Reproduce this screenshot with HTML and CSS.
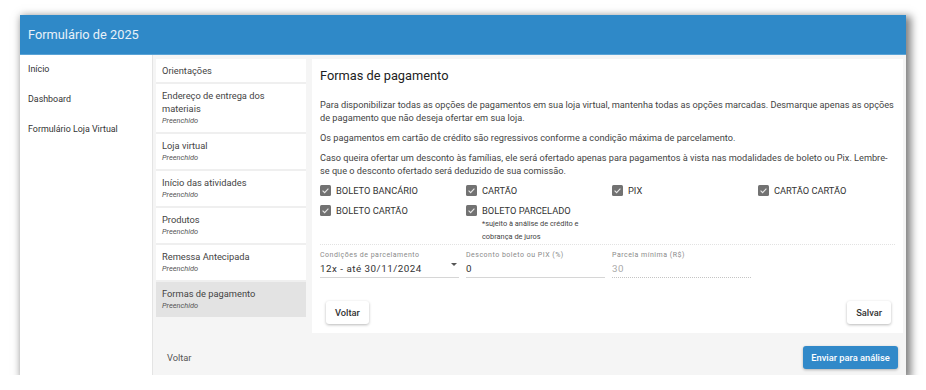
FILE: index.html
```html
<!DOCTYPE html>
<html lang="pt-BR">

<head>
    <meta charset="UTF-8">
    <title>Formulário de 2025</title>
    <link rel="stylesheet" href="styles.css">
</head>

<body>
    <div class="window">
        <!-- topo -->
        <header class="topbar">Formulário de 2025</header>

        <div class="layout">
            <!-- menu lateral -->
            <nav class="sidebar">
                <a class="nav-link">Início</a>
                <a class="nav-link">Dashboard</a>
                <a class="nav-link">Formulário Loja Virtual</a>
            </nav>

            <main class="main">
                <div class="workspace">
                    <!-- etapas -->
                    <ul class="steps">
                        <li class="step"><span class="step-title">Orientações</span></li>
                        <li class="step">
                            <span class="step-title">Endereço de entrega dos materiais</span>
                            <span class="step-status">Preenchido</span>
                        </li>
                        <li class="step">
                            <span class="step-title">Loja virtual</span>
                            <span class="step-status">Preenchido</span>
                        </li>
                        <li class="step">
                            <span class="step-title">Início das atividades</span>
                            <span class="step-status">Preenchido</span>
                        </li>
                        <li class="step">
                            <span class="step-title">Produtos</span>
                            <span class="step-status">Preenchido</span>
                        </li>
                        <li class="step">
                            <span class="step-title">Remessa Antecipada</span>
                            <span class="step-status">Preenchido</span>
                        </li>
                        <li class="step active">
                            <span class="step-title">Formas de pagamento</span>
                            <span class="step-status">Preenchido</span>
                        </li>
                    </ul>

                    <!-- formulário -->
                    <section class="card">
                        <h2 class="card-title">Formas de pagamento</h2>
                        <p class="text">Para disponibilizar todas as opções de pagamentos em sua loja virtual, mantenha todas as opções marcadas. Desmarque apenas as opções de pagamento que não deseja ofertar em sua loja.</p>
                        <p class="text">Os pagamentos em cartão de crédito são regressivos conforme a condição máxima de parcelamento.</p>
                        <p class="text">Caso queira ofertar um desconto às famílias, ele será ofertado apenas para pagamentos à vista nas modalidades de boleto ou Pix. Lembre-se que o desconto ofertado será deduzido de sua comissão.</p>

                        <div class="options">
                            <label class="option">
                                <svg class="check" viewBox="0 0 11 11"><rect width="11" height="11" rx="1.5" /><path d="M2.6 5.6l2 2 3.8-4" /></svg>
                                <span>BOLETO BANCÁRIO</span>
                            </label>
                            <label class="option">
                                <svg class="check" viewBox="0 0 11 11"><rect width="11" height="11" rx="1.5" /><path d="M2.6 5.6l2 2 3.8-4" /></svg>
                                <span>CARTÃO</span>
                            </label>
                            <label class="option">
                                <svg class="check" viewBox="0 0 11 11"><rect width="11" height="11" rx="1.5" /><path d="M2.6 5.6l2 2 3.8-4" /></svg>
                                <span>PIX</span>
                            </label>
                            <label class="option">
                                <svg class="check" viewBox="0 0 11 11"><rect width="11" height="11" rx="1.5" /><path d="M2.6 5.6l2 2 3.8-4" /></svg>
                                <span>CARTÃO CARTÃO</span>
                            </label>
                            <label class="option">
                                <svg class="check" viewBox="0 0 11 11"><rect width="11" height="11" rx="1.5" /><path d="M2.6 5.6l2 2 3.8-4" /></svg>
                                <span>BOLETO CARTÃO</span>
                            </label>
                            <label class="option">
                                <svg class="check" viewBox="0 0 11 11"><rect width="11" height="11" rx="1.5" /><path d="M2.6 5.6l2 2 3.8-4" /></svg>
                                <span>BOLETO PARCELADO
                                    <small class="note">*sujeito à análise de crédito e cobrança de juros</small>
                                </span>
                            </label>
                        </div>

                        <div class="fields">
                            <div class="field">
                                <span class="field-label">Condições de parcelamento</span>
                                <span class="field-value">12x - até 30/11/2024<i class="caret"></i></span>
                            </div>
                            <div class="field">
                                <span class="field-label">Desconto boleto ou PIX (%)</span>
                                <span class="field-value">0</span>
                            </div>
                            <div class="field disabled">
                                <span class="field-label">Parcela mínima (R$)</span>
                                <span class="field-value">30</span>
                            </div>
                        </div>

                        <div class="card-actions">
                            <button class="btn">Voltar</button>
                            <button class="btn">Salvar</button>
                        </div>
                    </section>
                </div>

                <!-- rodapé -->
                <footer class="footer">
                    <button class="btn-text">Voltar</button>
                    <button class="btn btn-primary">Enviar para análise</button>
                </footer>
            </main>
        </div>
    </div>
</body>

</html>
```

FILE: styles.css
```css
/* reset */

* {
    margin: 0;
    padding: 0;
    box-sizing: border-box;
}

body {
    background: #fff;
    font-family: Roboto, "Liberation Sans", sans-serif;
    color: #333;
}

.window {
    display: flex;
    flex-direction: column;
    width: 886px;
    height: 360px;
    margin: 15px 0 0 20px;
    background: #fff;
    box-shadow: 3px 3px 8px 2px rgba(0, 0, 0, .5);
}

.topbar {
    display: flex;
    align-items: center;
    height: 40px;
    padding-left: 8px;
    background: #2f89c8;
    border-bottom: 1px solid #5aa3d6;
    color: #e8f1f9;
    font-size: 12.8px;
}

.layout {
    flex: 1;
    display: flex;
    min-width: 0;
}

/* menu lateral */

.sidebar {
    flex: none;
    width: 132px;
    background: #fff;
}

.nav-link {
    display: block;
    padding: 4px 8px 5px;
    line-height: 21px;
    font-size: 8.9px;
    color: #333;
}

.main {
    flex: 1;
    min-width: 0;
    display: flex;
    flex-direction: column;
    background: #f5f5f5;
    border-left: 1px solid #e4e4e4;
}

.workspace {
    display: flex;
    align-items: flex-start;
    gap: 6px;
    padding: 4px 3px 0 3px;
}

/* etapas */

.steps {
    flex: none;
    width: 150px;
    list-style: none;
    background: #fff;
}

.step {
    display: flex;
    flex-direction: column;
    padding: 5px 8px 5px 6px;
    border-top: 2px solid #efefef;
}

.step:first-child {
    border-top: 0;
}

.step.active {
    background: #e3e3e3;
}

.step-title {
    font-size: 9.3px;
    line-height: 13px;
    color: #444;
}

.step-status {
    font-size: 7.4px;
    line-height: 12px;
    font-style: italic;
    color: #555;
}

/* formulário */

.card {
    flex: 1;
    min-width: 0;
    height: 274px;
    padding: 8px 5px 0 8px;
    background: #fff;
}

.card-title {
    font-size: 12.8px;
    line-height: 18px;
    font-weight: 400;
    color: #222;
    margin-bottom: 13px;
}

.text {
    max-width: 575px;
    font-size: 9.2px;
    line-height: 13px;
    color: #444;
    margin-bottom: 7px;
}

.options {
    display: grid;
    grid-template-columns: repeat(4, 146px);
    row-gap: 7px;
    margin-right: 3px;
    padding-bottom: 1px;
    border-bottom: 1px dotted #e2e2e2;
}

.option {
    display: flex;
    align-items: flex-start;
    gap: 5px;
    font-size: 9.3px;
    line-height: 13px;
    color: #333;
}

.check {
    flex: none;
    width: 11px;
    height: 11px;
    margin-top: 1px;
}

.check rect {
    fill: #727272;
}

.check path {
    fill: none;
    stroke: #e8e8e8;
    stroke-width: 1.1;
}

.note {
    display: block;
    width: 110px;
    font-size: 7.4px;
    line-height: 13px;
    color: #444;
}

.fields {
    display: grid;
    grid-template-columns: repeat(4, 146px);
    padding-top: 5px;
}

.field {
    display: flex;
    flex-direction: column;
    margin-right: 7px;
    border-bottom: 1px solid #d6d6d6;
}

.field-label {
    font-size: 7px;
    line-height: 10px;
    letter-spacing: .5px;
    color: #8a8a8a;
}

.field-value {
    display: flex;
    justify-content: space-between;
    margin-top: 1px;
    padding-bottom: 1px;
    font-size: 9.8px;
    line-height: 15px;
    letter-spacing: .5px;
    color: #333;
}

.caret {
    width: 0;
    height: 0;
    margin: 2px 2px 0 0;
    border-left: 3px solid transparent;
    border-right: 3px solid transparent;
    border-top: 3px solid #555;
}

.field.disabled {
    border-bottom: 1px dotted #c4c4c4;
}

.field.disabled .field-value {
    color: #aaa;
}

.card-actions {
    display: flex;
    justify-content: space-between;
    margin-top: 23px;
    padding: 0 7px 0 6px;
}

/* botões */

.btn {
    height: 23px;
    padding: 0 9px;
    border: 0;
    border-radius: 3px;
    background: #fff;
    box-shadow: 0 1px 3px rgba(0, 0, 0, .28);
    font-family: inherit;
    font-size: 9.3px;
    font-weight: 500;
    color: #333;
}

.btn-primary {
    width: 95px;
    padding: 0;
    background: #3189c9;
    color: #fff;
}

.footer {
    display: flex;
    justify-content: space-between;
    align-items: center;
    margin-top: auto;
    padding: 13px 8px 6px 14px;
}

.btn-text {
    border: 0;
    background: transparent;
    font-family: inherit;
    font-size: 9.3px;
    color: #555;
}
```
